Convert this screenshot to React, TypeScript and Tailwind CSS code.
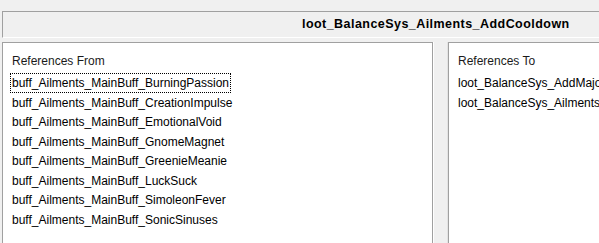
const fromItems = [
  "buff_Ailments_MainBuff_BurningPassion",
  "buff_Ailments_MainBuff_CreationImpulse",
  "buff_Ailments_MainBuff_EmotionalVoid",
  "buff_Ailments_MainBuff_GnomeMagnet",
  "buff_Ailments_MainBuff_GreenieMeanie",
  "buff_Ailments_MainBuff_LuckSuck",
  "buff_Ailments_MainBuff_SimoleonFever",
  "buff_Ailments_MainBuff_SonicSinuses",
];

const toItems = [
  "loot_BalanceSys_AddMajorCooldown",
  "loot_BalanceSys_Ailments_AddCooldown",
];

export default function App() {
  return (
    <div
      className="w-[599px] h-[243px] overflow-hidden bg-[#f0f0f0] text-[12px] text-black"
      style={{ fontFamily: '"Liberation Sans", Arial, sans-serif' }}
    >
      {/* Header */}
      <div className="mt-[11px] ml-[2px] w-[620px] h-[27px] border-t border-l border-b border-t-[#a0a0a0] border-l-[#a0a0a0] border-b-white flex items-center">
        <span className="ml-[299px] font-bold text-[12.5px] tracking-[0.45px]">
          loot_BalanceSys_Ailments_AddCooldown
        </span>
      </div>

      {/* Panels */}
      <div className="mt-[4px] ml-[2px] flex">
        <ListPanel title="References From" items={fromItems} width="w-[431px]" focused />
        {/* splitter */}
        <div className="w-[15px] shrink-0 h-[230px] border-l border-r border-l-white border-r-[#e3e3e3]" />
        <ListPanel title="References To" items={toItems} width="w-[200px]" />
      </div>
    </div>
  );
}

function ListPanel({
  title,
  items,
  width,
  focused,
}: {
  title: string;
  items: string[];
  width: string;
  focused?: boolean;
}) {
  return (
    <div
      className={`${width} shrink-0 h-[230px] bg-white border-t border-l border-r border-[#a0a0a0] whitespace-nowrap overflow-hidden`}
    >
      <div className="pl-[9px] pt-[9px] h-[30px] text-[#1a1a1a]">{title}</div>
      <ul className="pl-[7px]">
        {items.map((item, i) => (
          <li
            key={item}
            className={`h-[19.5px] leading-[18px] px-[1px] w-fit ${
              focused && i === 0 ? "border border-dotted border-black" : "border border-transparent"
            }`}
          >
            {item}
          </li>
        ))}
      </ul>
    </div>
  );
}
